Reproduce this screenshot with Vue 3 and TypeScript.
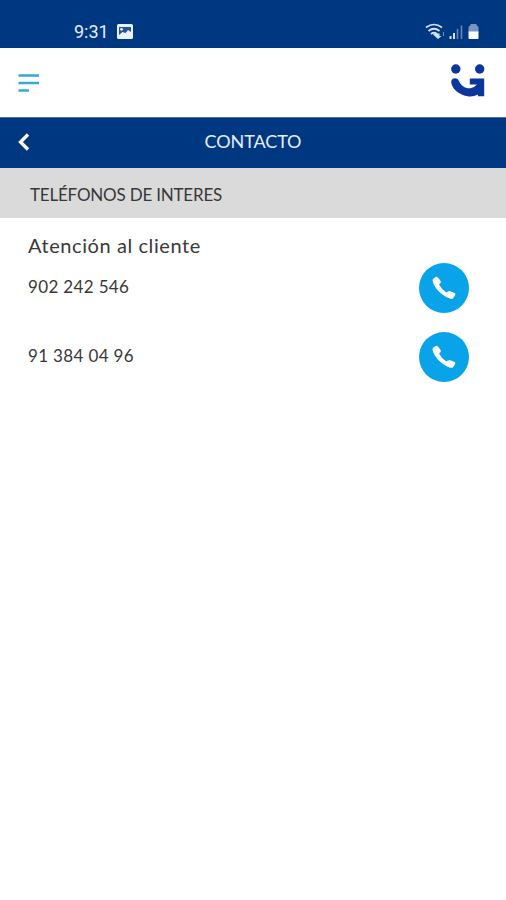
<script setup lang="ts">
interface Phone {
  label: string
  href: string
}

const phones: Phone[] = [
  { label: '902 242 546', href: 'tel:902242546' },
  { label: '91 384 04 96', href: 'tel:913840496' },
]
</script>

<template>
  <div class="screen">
    <div class="status">
      <span class="time">9:31</span>
      <svg class="photo" width="16" height="15" viewBox="0 0 16 15">
        <rect x="0" y="0" width="16" height="15" rx="1.5" fill="#e9f1fb" />
        <path d="M2 3h12v5L11 6 8.500 9 5.500 8 2 11z" fill="#23559b" />
        <circle cx="4.500" cy="5.300" r="1.400" fill="#e9f1fb" />
      </svg>
      <svg class="signals" width="56" height="18" viewBox="0 0 56 18">
        <g fill="none" stroke="#d3e2f5" stroke-width="1.700">
          <path d="M1 4.500Q9-1.500 17 4.500" />
          <path d="M3.500 8Q9 3.500 14.500 8" />
          <path d="M6 11Q9 8.500 12 11" />
        </g>
        <path d="M9.500 10.500h5v2.500h2l-3.500 3-5-4.500z" fill="#d3e2f5" />
        <path d="M18.500 9v4" stroke="#6f91c1" fill="none" />
        <path d="M25.500 13v3M29 10v6" stroke="#d3e2f5" stroke-width="2" />
        <path d="M32.500 6v10M36.500 2.500v13.500" stroke="#6487ba" stroke-width="1.600" />
        <path d="M43.500 9V4.500q0-1.500 2-2V1h6v1.500q2 .5 2 2V9z" fill="#7896c1" />
        <path d="M43.500 8.500h10V15q0 1-1 1h-8q-1 0-1-1z" fill="#fff" />
      </svg>
    </div>

    <header class="brand">
      <svg class="menu" width="22" height="19" viewBox="0 0 22 19">
        <path d="M.5 1.500h20.500M.5 9h20.500M.5 16.500H11" stroke="#35a8d8" stroke-width="2.700" />
      </svg>
      <svg class="logo" width="36" height="34" viewBox="0 0 36 34">
        <g fill="#0b369b">
          <circle cx="5.800" cy="5" r="4.700" />
          <circle cx="29.700" cy="5" r="4.700" />
          <path d="M19.800 14.500H34.200V32.300H28V30.500Q23 33.200 17.500 32.300C8.500 30.800 1.800 24.500 1.200 18C1 13.500 7.500 12.700 9 17C11 22 15.500 24.700 20.500 24.200Q24.500 23.500 27 20.500H19.800z" />
        </g>
      </svg>
    </header>

    <nav class="title">
      <svg class="back" width="12" height="18" viewBox="0 0 12 18">
        <path d="M10 1.500L2.500 9l7.500 7.500" fill="none" stroke="#fff" stroke-width="3.300" />
      </svg>
      <h1>CONTACTO</h1>
    </nav>

    <div class="section"><h2>TELÉFONOS DE INTERES</h2></div>

    <main>
      <h3>Atención al cliente</h3>
      <div v-for="phone in phones" :key="phone.href" class="row">
        <span class="number">{{ phone.label }}</span>
        <a class="call" :href="phone.href">
          <svg width="24" height="24" viewBox="0 0 24 24">
            <path fill="#fff" d="M1.200 2.800L3.700.9Q5 .2 6 1.500L8.600 5Q9.300 6.200 8.300 7.200L7.100 8.600Q9.200 13.200 14.300 16.500L15.900 15.400Q17 14.600 18.200 15.300L22.600 17Q23.900 17.800 23.200 19L21.300 21.900Q20.300 23.200 18.300 22.700C10 20 2 12 .6 5Q.3 3.600 1.200 2.800z" />
          </svg>
        </a>
      </div>
    </main>
  </div>
</template>

<style>
body {
  background: #fff;
}
</style>

<style scoped>
.screen {
  min-height: 900px;
  background: #fff;
  font-family: Lato, "Open Sans", sans-serif;
  color: #383838;
}
h1,
h2,
h3 {
  margin: 0;
  font-weight: 400;
}
.status {
  display: flex;
  align-items: flex-start;
  height: 48px;
  box-sizing: border-box;
  padding: 22px 25px 0 74px;
  background: #003781;
}
.time {
  width: 43px;
  font: 400 18px/20px Roboto, sans-serif;
  color: #e4edf8;
}
.photo {
  margin-top: 2px;
}
.signals {
  margin-left: auto;
  margin-top: 1px;
}
.brand {
  display: flex;
  align-items: center;
  justify-content: space-between;
  height: 69px;
  box-sizing: border-box;
  padding: 0 20px 0 18px;
}
.menu {
  margin-top: 1px;
}
.logo {
  margin-top: -4px;
}
.title {
  display: grid;
  grid-template-columns: 40px 1fr 40px;
  align-items: center;
  height: 51px;
  box-sizing: border-box;
  padding-bottom: 3px;
  background: #003781;
  border-top: 1px solid #52719f;
}
.back {
  margin-left: 18px;
}
.title h1 {
  padding-bottom: 2px;
  text-align: center;
  font-size: 18px;
  line-height: 24px;
  letter-spacing: -0.1px;
  color: #e6eefa;
}
.section {
  display: flex;
  align-items: center;
  height: 50px;
  padding: 4px 30px 0;
  box-sizing: border-box;
  background: #dadada;
}
.section h2 {
  font-size: 17px;
  line-height: 22px;
  letter-spacing: -0.2px;
}
main {
  padding: 15px 37px 0 28px;
}
h3 {
  font-size: 20px;
  line-height: 24px;
  letter-spacing: 0.58px;
}
.row {
  display: flex;
  justify-content: space-between;
  align-items: center;
  height: 50px;
  margin: 6px 0 19px;
}
.row + .row {
  margin-top: 0;
}
.number {
  padding-bottom: 3px;
  font-size: 17px;
  letter-spacing: 0.35px;
}
.call {
  display: flex;
  align-items: center;
  justify-content: center;
  width: 50px;
  height: 50px;
  border-radius: 50%;
  background: #08a3e8;
}
</style>
